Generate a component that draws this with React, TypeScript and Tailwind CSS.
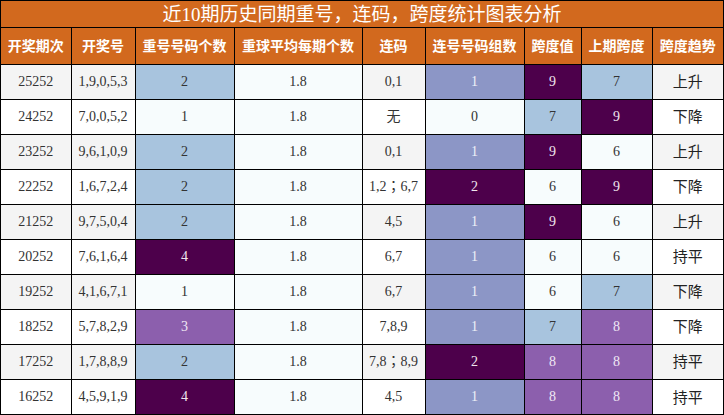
import React from "react";

// BuPu-style heat colours
const bg: Record<string, string> = {
  l: "bg-[#f7fcfd] text-[#333]",
  b: "bg-[#a8c4de] text-[#333]",
  m: "bg-[#8c96c6] text-[#eef0f8]",
  p: "bg-[#8c5fad] text-[#f0e8f4]",
  d: "bg-[#4d004b] text-[#f0e6ee]",
};

const headers = [
  "开奖期次",
  "开奖号",
  "重号号码个数",
  "重球平均每期个数",
  "连码",
  "连号号码组数",
  "跨度值",
  "上期跨度",
  "跨度趋势",
];

const widths = ["w-[70px]", "w-[64px]", "w-[99px]", "w-[128px]", "w-[63px]", "w-[99px]", "w-[57px]", "w-[71px]", "w-[71px]"];

type Row = {
  issue: string;
  nums: string;
  rep: [string, string];
  lian: string;
  group: [string, string];
  span: [string, string];
  prev: [string, string];
  trend: string;
};

const rows: Row[] = [
  { issue: "25252", nums: "1,9,0,5,3", rep: ["2", "b"], lian: "0,1", group: ["1", "m"], span: ["9", "d"], prev: ["7", "b"], trend: "上升" },
  { issue: "24252", nums: "7,0,0,5,2", rep: ["1", "l"], lian: "无", group: ["0", "l"], span: ["7", "b"], prev: ["9", "d"], trend: "下降" },
  { issue: "23252", nums: "9,6,1,0,9", rep: ["2", "b"], lian: "0,1", group: ["1", "m"], span: ["9", "d"], prev: ["6", "l"], trend: "上升" },
  { issue: "22252", nums: "1,6,7,2,4", rep: ["2", "b"], lian: "1,2；6,7", group: ["2", "d"], span: ["6", "l"], prev: ["9", "d"], trend: "下降" },
  { issue: "21252", nums: "9,7,5,0,4", rep: ["2", "b"], lian: "4,5", group: ["1", "m"], span: ["9", "d"], prev: ["6", "l"], trend: "上升" },
  { issue: "20252", nums: "7,6,1,6,4", rep: ["4", "d"], lian: "6,7", group: ["1", "m"], span: ["6", "l"], prev: ["6", "l"], trend: "持平" },
  { issue: "19252", nums: "4,1,6,7,1", rep: ["1", "l"], lian: "6,7", group: ["1", "m"], span: ["6", "l"], prev: ["7", "b"], trend: "下降" },
  { issue: "18252", nums: "5,7,8,2,9", rep: ["3", "p"], lian: "7,8,9", group: ["1", "m"], span: ["7", "b"], prev: ["8", "p"], trend: "下降" },
  { issue: "17252", nums: "1,7,8,8,9", rep: ["2", "b"], lian: "7,8；8,9", group: ["2", "d"], span: ["8", "p"], prev: ["8", "p"], trend: "持平" },
  { issue: "16252", nums: "4,5,9,1,9", rep: ["4", "d"], lian: "4,5", group: ["1", "m"], span: ["8", "p"], prev: ["8", "p"], trend: "持平" },
];

const font = "font-['Liberation_Serif','Noto_Sans_CJK_SC',serif]";
const cjk = "font-['Noto_Sans_CJK_SC',sans-serif]";

export default function App() {
  return (
    <div className={`w-[724px] h-[415px] border border-black bg-white ${font}`}>
      {/* Title */}
      <div className="h-[27px] bg-[#d2691e] text-white text-[19px] leading-none flex items-center justify-center border-b border-black">
        近10期历史同期重号，连码，跨度统计图表分析
      </div>

      <table className="w-full table-fixed border-collapse text-[14px] text-[#333] text-center">
        <colgroup>
          {widths.map((w, i) => (
            <col key={i} className={w} />
          ))}
        </colgroup>
        <thead>
          <tr className="h-[36px] bg-[#d2691e]">
            {headers.map((h, i) => (
              <th
                key={h}
                className={`border-b border-black font-bold text-white text-[14px] ${cjk} ${i > 0 ? "border-l" : ""}`}
              >
                {h}
              </th>
            ))}
          </tr>
        </thead>
        <tbody>
          {rows.map((r, i) => {
            const plain = i % 2 === 0 ? "bg-[#f4f4f4]" : "bg-white";
            const cell = "border-black border-t border-l first:border-l-0 p-0";
            return (
              <tr key={r.issue} className="h-[35px]">
                <td className={`${cell} ${plain}`}>{r.issue}</td>
                <td className={`${cell} ${plain}`}>{r.nums}</td>
                <td className={`${cell} ${bg[r.rep[1]]}`}>{r.rep[0]}</td>
                <td className={`${cell} ${bg.l}`}>1.8</td>
                <td className={`${cell} ${plain} whitespace-nowrap font-['Liberation_Serif','Noto_Sans_CJK_TC',serif]`}>
                  {r.lian}
                </td>
                <td className={`${cell} ${bg[r.group[1]]}`}>{r.group[0]}</td>
                <td className={`${cell} ${bg[r.span[1]]}`}>{r.span[0]}</td>
                <td className={`${cell} ${bg[r.prev[1]]}`}>{r.prev[0]}</td>
                <td className={`${cell} ${plain} ${cjk} text-[15px] text-[#222]`}>{r.trend}</td>
              </tr>
            );
          })}
        </tbody>
      </table>
    </div>
  );
}
